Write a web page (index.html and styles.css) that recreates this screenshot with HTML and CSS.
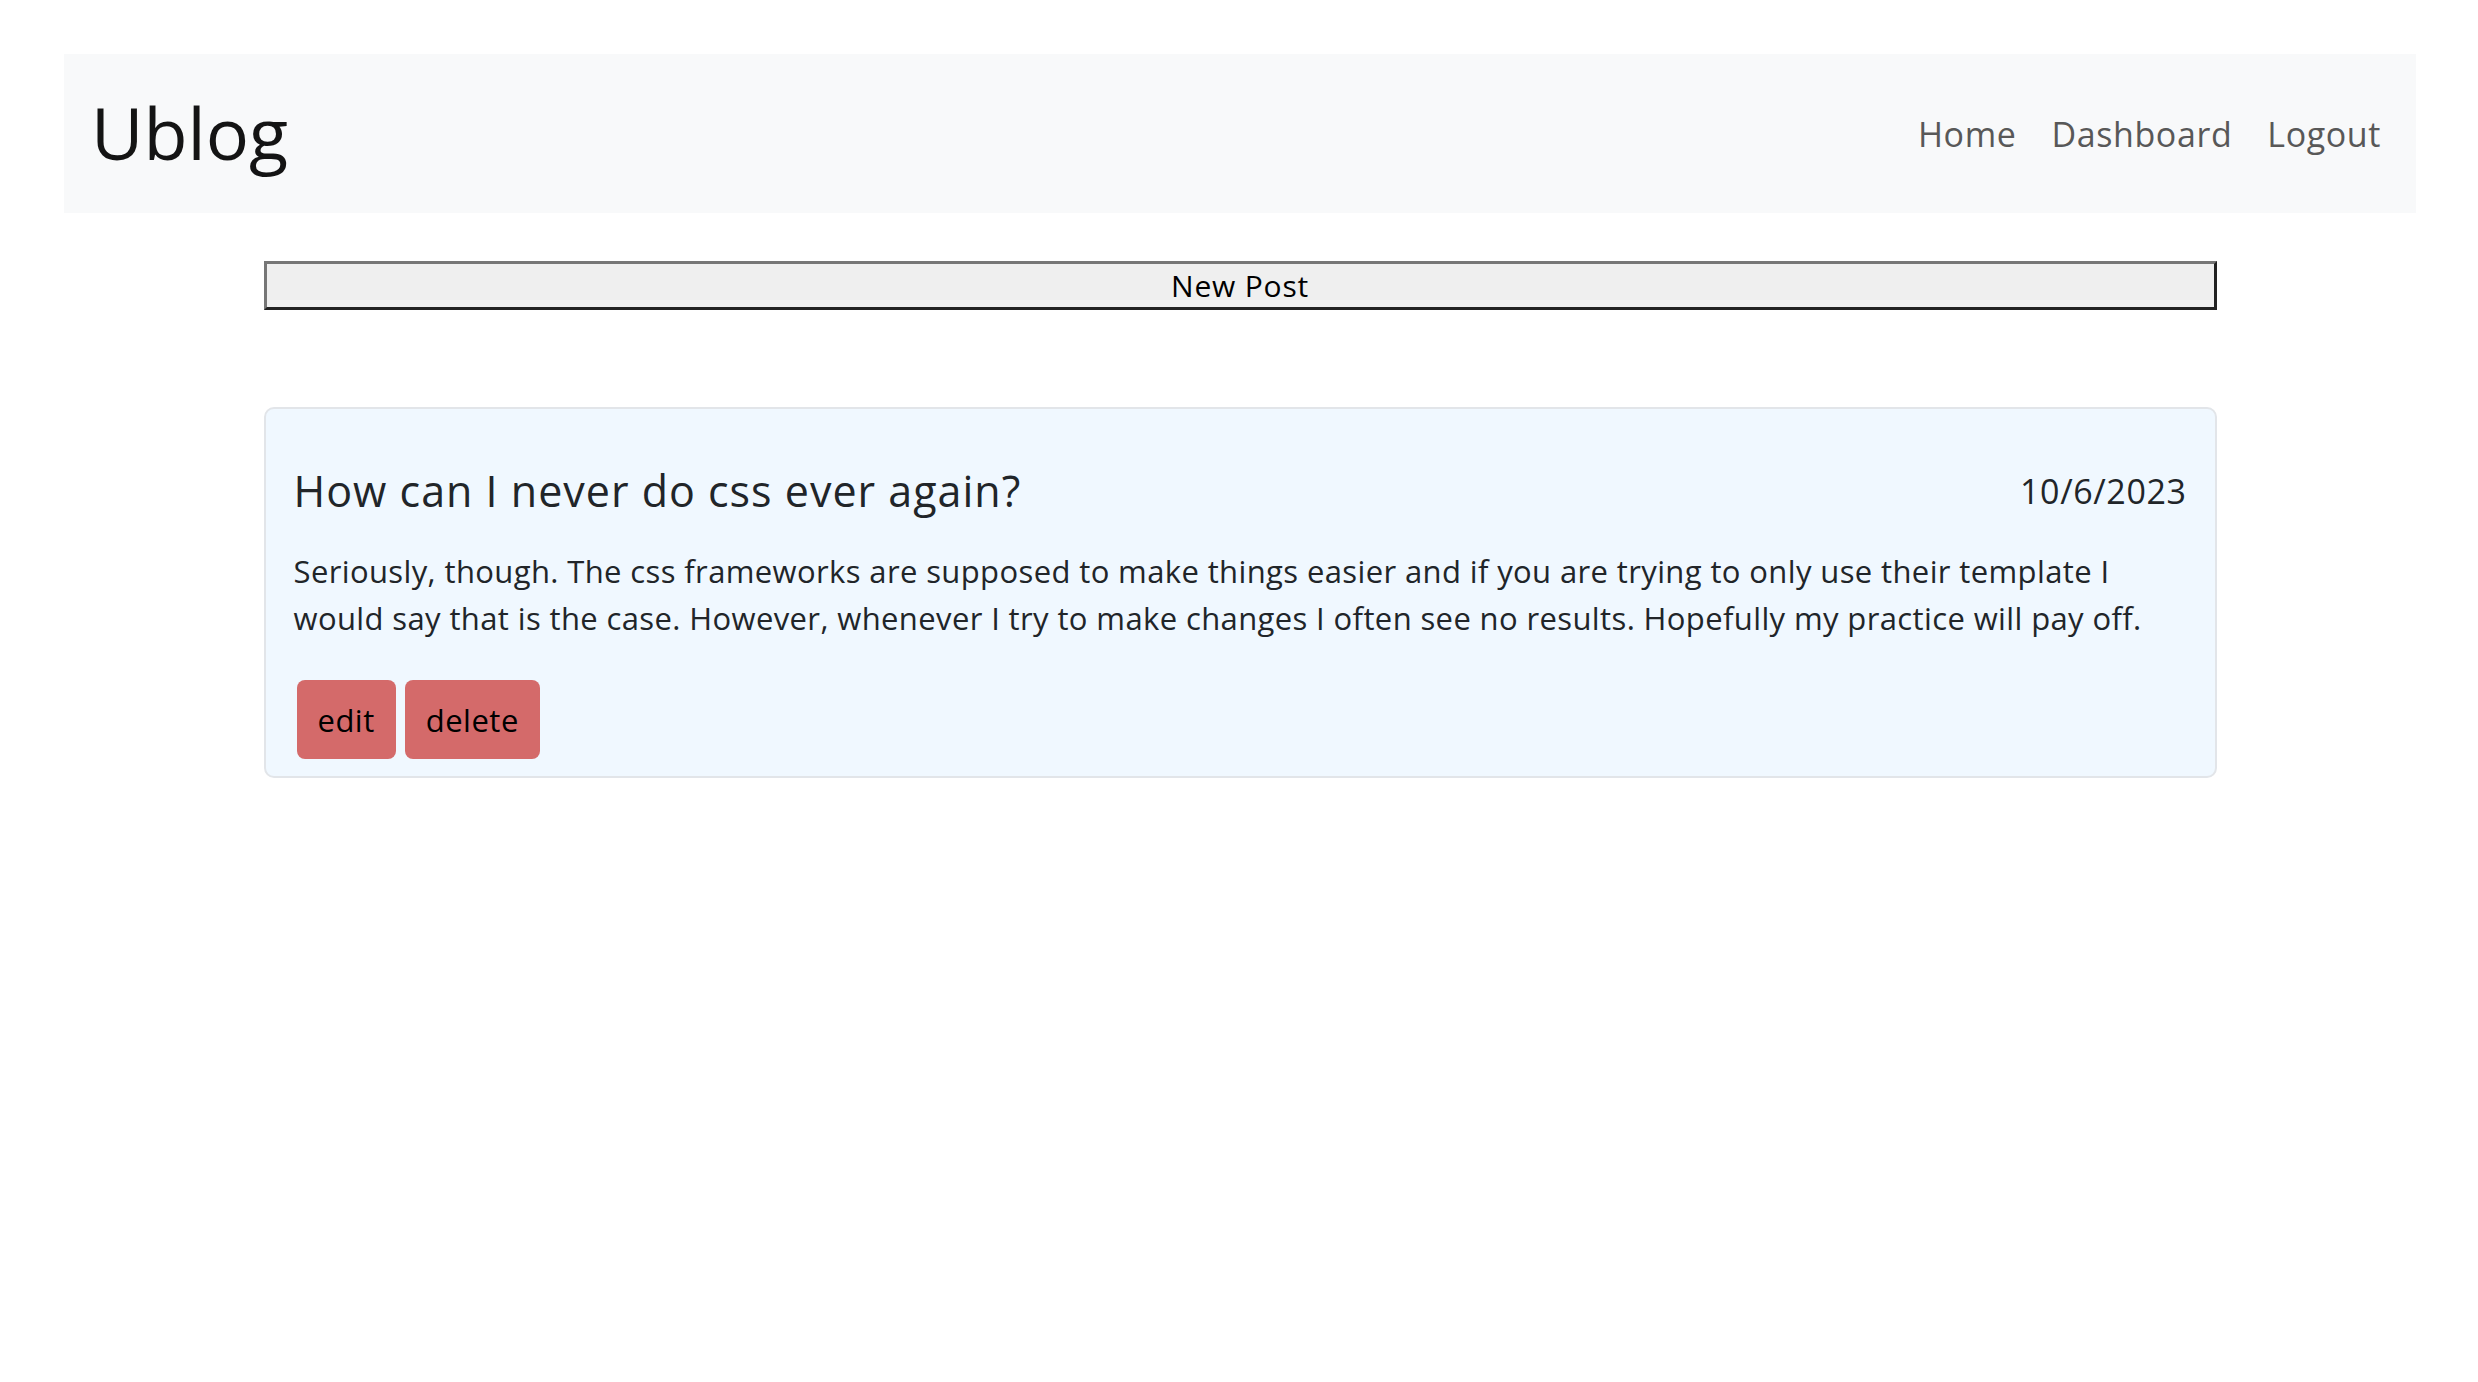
FILE: index.html
```html
<!DOCTYPE html>
<html lang="en">
<head>
<meta charset="utf-8">
<title>Ublog</title>
<link rel="stylesheet" href="styles.css">
</head>
<body>
<div class="page">
  <nav class="navbar">
    <a class="brand" href="#">Ublog</a>
    <ul class="nav-links">
      <li><a href="#">Home</a></li>
      <li><a href="#">Dashboard</a></li>
      <li><a href="#">Logout</a></li>
    </ul>
  </nav>
  <main class="content">
    <button class="new-post" type="button">New Post</button>
    <article class="post-card">
      <header class="post-header">
        <h4 class="post-title">How can I never do css ever again?</h4>
        <span class="post-date">10/6/2023</span>
      </header>
      <p class="post-body">Seriously, though. The css frameworks are supposed to make things easier and if you are trying to only use their template I would say that is the case. However, whenever I try to make changes I often see no results. Hopefully my practice will pay off.</p>
      <div class="post-actions">
        <button class="btn-danger" type="button">edit</button>
        <button class="btn-danger" type="button">delete</button>
      </div>
    </article>
  </main>
</div>
</body>
</html>
```

FILE: styles.css
```css
html, body {
  margin: 0;
  padding: 0;
  background: #ffffff;
}

body {
  font-family: "Open Sans", "DejaVu Sans", sans-serif;
  color: #212529;
}

.page {
  padding: 54px 62px 0 64px;
}

.navbar {
  display: flex;
  align-items: center;
  justify-content: space-between;
  height: 159px;
  background: #f8f9fa;
  padding: 0 35px 0 27px;
  box-sizing: border-box;
}

.brand {
  font-size: 72px;
  line-height: 1;
  color: rgba(0, 0, 0, 0.92);
  text-decoration: none;
  padding-bottom: 4px;
}

.nav-links {
  display: flex;
  list-style: none;
  margin: 0;
  padding: 0;
  gap: 35px;
}

.nav-links a {
  font-size: 34px;
  letter-spacing: 0.6px;
  color: #585858;
  text-decoration: none;
}

.content {
  width: 1953px;
  margin: 48px auto 0;
  display: flex;
  flex-direction: column;
}

.new-post {
  height: 49px;
  background: #efefef;
  border-width: 3px;
  border-style: solid;
  border-color: #767676 #222222 #222222 #767676;
  font-family: "Open Sans", "DejaVu Sans", sans-serif;
  font-size: 30px;
  letter-spacing: 0.8px;
  color: #000;
  padding: 0;
  line-height: 1;
}

.post-card {
  margin-top: 97px;
  background: #f0f8ff;
  border: 2px solid #e2e5e9;
  border-radius: 10px;
  padding: 30px 28px 17px 28px;
}

.post-header {
  display: flex;
  align-items: center;
  justify-content: space-between;
  margin-top: 27px;
}

.post-title {
  margin: 0;
  font-size: 43px;
  letter-spacing: 1px;
  font-weight: 400;
  line-height: 50px;
  color: #212529;
}

.post-date {
  font-size: 34px;
  letter-spacing: 0.6px;
  color: #212529;
}

.post-body {
  margin: 32px 0 0;
  font-size: 31px;
  letter-spacing: 0.38px;
  line-height: 47px;
  color: #212529;
}

.post-actions {
  display: flex;
  gap: 9px;
  margin: 38px 0 0 3px;
}

.btn-danger {
  background: #d46a6a;
  border: none;
  border-radius: 8px;
  color: #000;
  font-family: "Open Sans", "DejaVu Sans", sans-serif;
  font-size: 31px;
  letter-spacing: 0.5px;
  height: 79px;
  padding: 0 21px;
}
```
